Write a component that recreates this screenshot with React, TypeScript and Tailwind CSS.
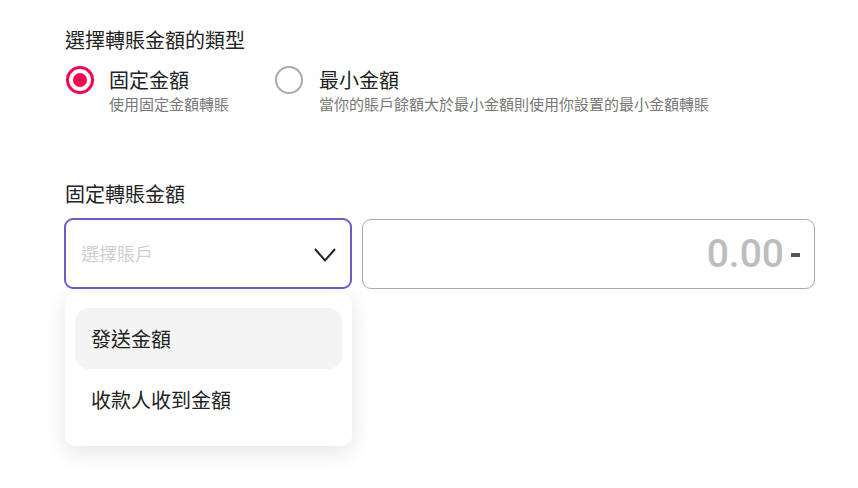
import React from "react";

export default function App() {
  return (
    <div
      className="w-[858px] h-[488px] bg-white relative overflow-hidden pl-[65px] pt-[26px] text-[#222]"
      style={{ fontFamily: '"Noto Sans CJK TC", "Noto Sans", sans-serif' }}
    >
      <div className="text-[20px] leading-[28px]">選擇轉賬金額的類型</div>

      <div className="flex mt-[12px]">
        <div className="flex">
          <div className="w-[28px] h-[28px] ml-[1px] rounded-full border-[3px] border-[#f0094f] flex items-center justify-center">
            <div className="w-[14px] h-[14px] rounded-full bg-[#f0094f]" />
          </div>
          <div className="ml-[15px]">
            <div className="text-[20px] leading-[28px]">固定金額</div>
            <div className="text-[15px] leading-[20px] text-[#777]">使用固定金額轉賬</div>
          </div>
        </div>
        <div className="flex ml-[46px]">
          <div className="w-[28px] h-[28px] rounded-full border-2 border-[#aaa]" />
          <div className="ml-[16px]">
            <div className="text-[20px] leading-[28px]">最小金額</div>
            <div className="text-[15px] leading-[20px] text-[#777]">
              當你的賬戶餘額大於最小金額則使用你設置的最小金額轉賬
            </div>
          </div>
        </div>
      </div>

      <div className="text-[20px] leading-[28px] mt-[66px]">固定轉賬金額</div>

      <div className="flex mt-[10px] -ml-[1px] gap-[10px] items-start">
        <div className="relative">
          <div className="w-[288px] h-[71px] rounded-[9px] border-2 border-[#6560c4] flex items-center pl-[15px] pr-[14px] justify-between">
            <span className="text-[18px] text-[#cfcfcf]">選擇賬戶</span>
            <svg width="22" height="14" viewBox="0 0 22 14" className="mt-[2px]">
              <polyline points="1,1 11,12.5 21,1" fill="none" stroke="#222" strokeWidth="2" />
            </svg>
          </div>
          <div className="absolute left-[1px] top-[75px] w-[287px] rounded-[10px] bg-white shadow-[0_6px_22px_rgba(0,0,0,0.11)] px-[10px] pt-[15px] pb-[15px] z-10">
            <div className="h-[61px] rounded-[14px] bg-[#f4f4f4] flex items-center pl-[16px] text-[20px]">
              發送金額
            </div>
            <div className="h-[62px] flex items-center pl-[16px] text-[20px]">
              收款人收到金額
            </div>
          </div>
        </div>
        <div className="w-[453px] h-[70px] mt-[1px] rounded-[9px] border border-[#aaa] flex items-center justify-end pr-[14px]">
          <span
            className="text-[39px] leading-none font-medium text-[#bdbdbd]"
            style={{ fontFamily: "Roboto, sans-serif" }}
          >
            0.00
          </span>
          <span className="ml-[7px] w-[9px] h-[4px] bg-[#555] mt-[1px]" />
        </div>
      </div>
    </div>
  );
}
